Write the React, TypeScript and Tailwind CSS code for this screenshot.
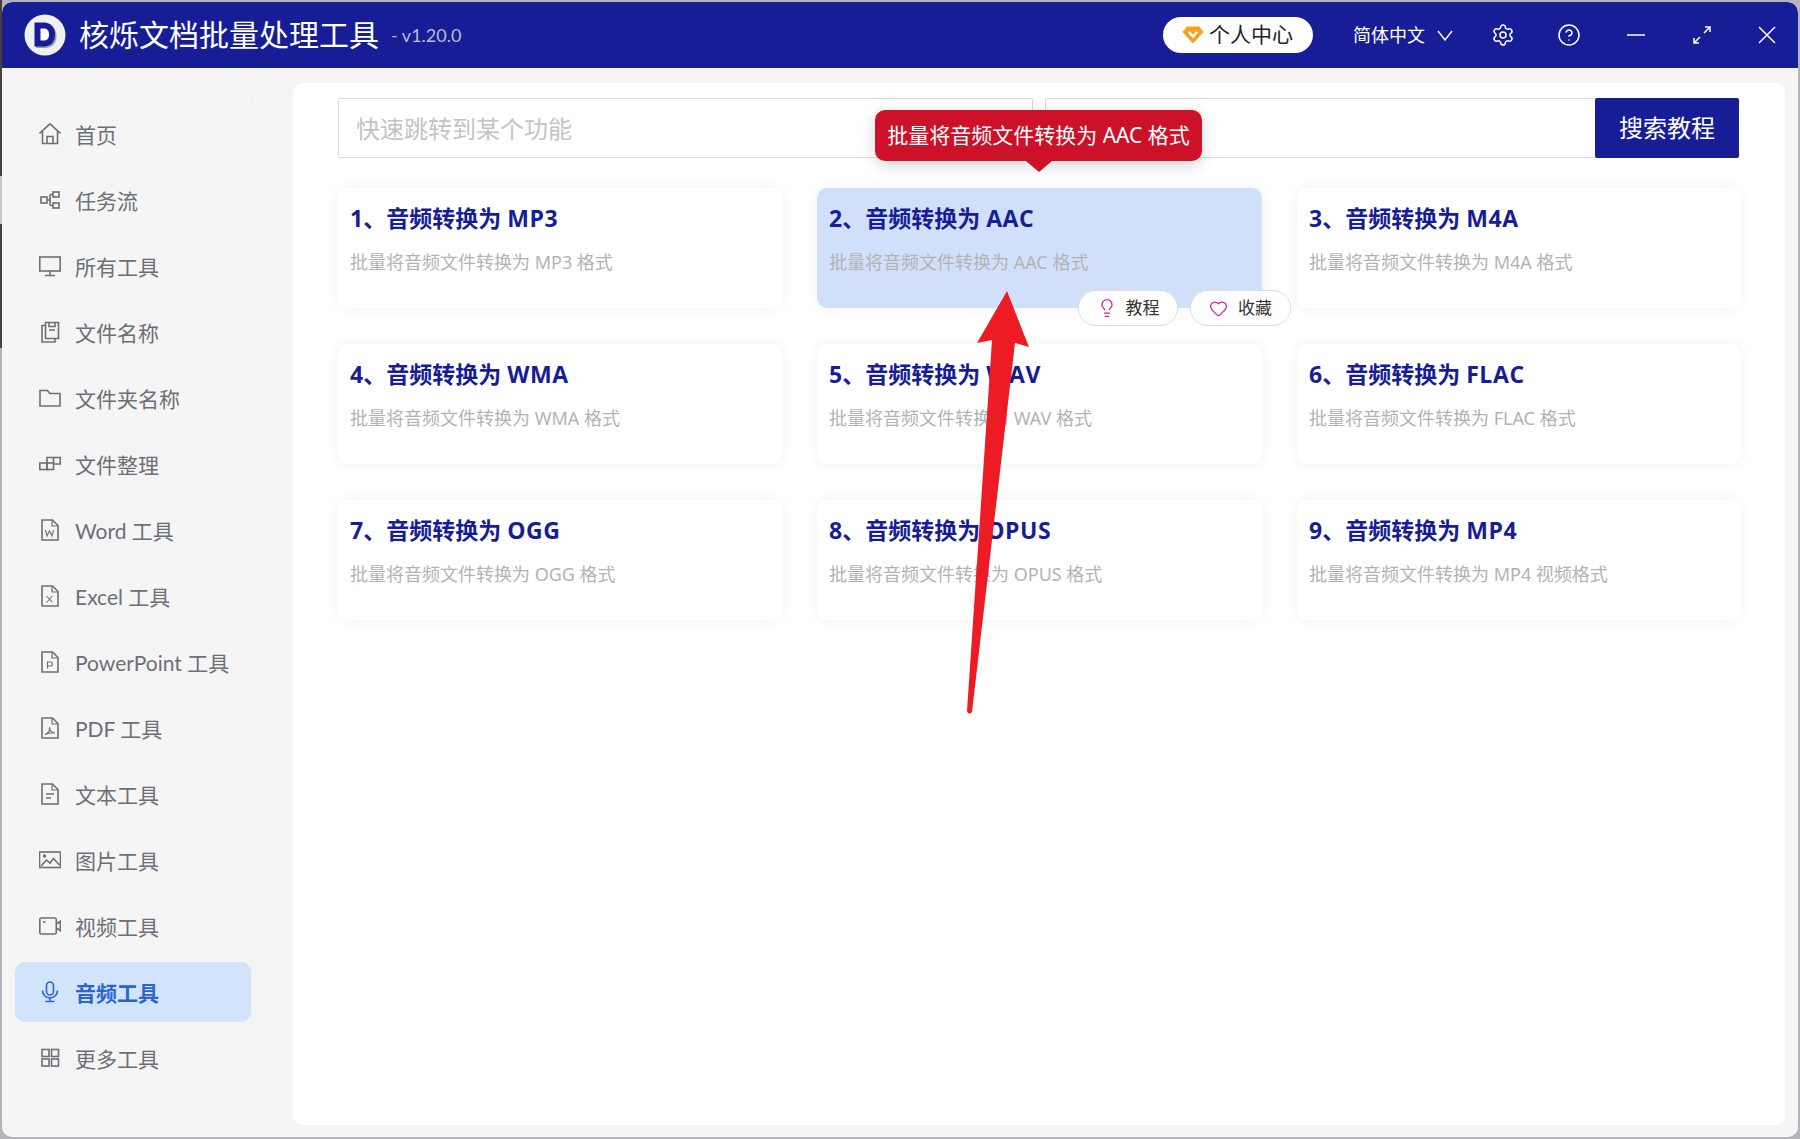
import { CircleHelp, Heart, Lightbulb, Settings } from "lucide-react";
import type { ReactNode } from "react";

const FONT = "font-['Noto_Sans','Noto_Sans_CJK_SC',sans-serif]";

const Ico = ({ children }: { children: ReactNode }) => (
  <svg width="22" height="22" viewBox="0 0 22 22" fill="none" stroke="currentColor" strokeWidth="1.6" className="shrink-0">
    {children}
  </svg>
);

const DocIcon = ({ children }: { children?: ReactNode }) => (
  <Ico>
    <path d="M3 1h10.500L19 6.500V21H3z" />
    <path d="M13 1v6h6" strokeWidth="1.2" />
    {children}
  </Ico>
);

const Letter = ({ d }: { d: string }) => <path d={d} strokeWidth="1.1" />;

const navItems: { label: string; icon: ReactNode; active?: boolean }[] = [
  {
    label: "首页",
    icon: (
      <Ico>
        <path d="M.5 10.500 11 .8l10.500 9.700M3.500 8.500V20.500h15V8.500" />
        <path d="M8 20.500v-7h6v7" />
      </Ico>
    ),
  },
  {
    label: "任务流",
    icon: (
      <Ico>
        <rect x="2" y="8" width="6" height="6" />
        <rect x="14" y="3" width="6" height="5" />
        <rect x="14" y="14" width="6" height="5" />
        <path d="M8 11h3M11 5.500h3M11 16.500h3M11 5.500v11" />
      </Ico>
    ),
  },
  {
    label: "所有工具",
    icon: (
      <Ico>
        <rect x=".8" y="2" width="20.400" height="14" />
        <path d="M11 16v4.500M6 20.500h10" />
      </Ico>
    ),
  },
  {
    label: "文件名称",
    icon: (
      <Ico>
        <path d="M6.500 4.500H3v16.500h13v-3.500" />
        <path d="M6.500 1.500v16h13V1.500zM10 1.500v4h6v-4M10 9h6" />
      </Ico>
    ),
  },
  {
    label: "文件夹名称",
    icon: (
      <Ico>
        <path d="M1 3.500h7.500l2.500 3h10v12.500H1z" />
      </Ico>
    ),
  },
  {
    label: "文件整理",
    icon: (
      <Ico>
        <rect x=".8" y="10" width="7.200" height="6.500" />
        <rect x="8" y="10" width="6.500" height="6.500" />
        <path d="M8 10V4.500h13.200V11h-6.700M14.500 4.500V10" />
      </Ico>
    ),
  },
  {
    label: "Word 工具",
    icon: (
      <DocIcon>
        <Letter d="m6.500 11 1.500 6 2.500-5 2.500 5 1.500-6" />
      </DocIcon>
    ),
  },
  {
    label: "Excel 工具",
    icon: (
      <DocIcon>
        <Letter d="m7.500 11 6 6.500M13.500 11l-6 6.500" />
      </DocIcon>
    ),
  },
  {
    label: "PowerPoint 工具",
    icon: (
      <DocIcon>
        <Letter d="M8.500 17.500V11h3a2 2 0 0 1 0 4h-3" />
      </DocIcon>
    ),
  },
  {
    label: "PDF 工具",
    icon: (
      <DocIcon>
        <Letter d="M6 17.500c3-1 5-4 4.500-7.500 0 3 2 5.500 5.500 6-3-.500-6.500 0-10 1.500z" />
      </DocIcon>
    ),
  },
  {
    label: "文本工具",
    icon: (
      <DocIcon>
        <path d="M7 11h8M7 15h5" />
      </DocIcon>
    ),
  },
  {
    label: "图片工具",
    icon: (
      <Ico>
        <rect x=".5" y="3" width="21" height="15.500" />
        <circle cx="5.500" cy="7" r="1" />
        <path d="m2 17 5.500-6 3.500 3 3.500-4.500 6 6.500" />
      </Ico>
    ),
  },
  {
    label: "视频工具",
    icon: (
      <Ico>
        <rect x=".8" y="3" width="16.500" height="16" rx="1.500" />
        <path d="m17.300 9 4-2.500v9l-4-2.500M4 7h2.500" />
      </Ico>
    ),
  },
  {
    label: "音频工具",
    active: true,
    icon: (
      <Ico>
        <rect x="7.500" y="1" width="7" height="13" rx="3.500" />
        <path d="M3.500 9.500a7.500 7.500 0 0 0 15 0M11 17v3.500M6.500 20.500h9" />
      </Ico>
    ),
  },
  {
    label: "更多工具",
    icon: (
      <Ico>
        <rect x="3" y="2.500" width="7" height="7" />
        <rect x="12.500" y="2.500" width="7" height="7" />
        <rect x="3" y="12" width="7" height="7" />
        <rect x="12.500" y="12" width="7" height="7" />
      </Ico>
    ),
  },
];

const cards = [
  { title: "1、音频转换为", fmt: "MP3", desc: "批量将音频文件转换为 MP3 格式" },
  { title: "2、音频转换为", fmt: "AAC", desc: "批量将音频文件转换为 AAC 格式", active: true },
  { title: "3、音频转换为", fmt: "M4A", desc: "批量将音频文件转换为 M4A 格式" },
  { title: "4、音频转换为", fmt: "WMA", desc: "批量将音频文件转换为 WMA 格式" },
  { title: "5、音频转换为", fmt: "WAV", desc: "批量将音频文件转换为 WAV 格式" },
  { title: "6、音频转换为", fmt: "FLAC", desc: "批量将音频文件转换为 FLAC 格式" },
  { title: "7、音频转换为", fmt: "OGG", desc: "批量将音频文件转换为 OGG 格式" },
  { title: "8、音频转换为", fmt: "OPUS", desc: "批量将音频文件转换为 OPUS 格式" },
  { title: "9、音频转换为", fmt: "MP4", desc: "批量将音频文件转换为 MP4 视频格式" },
];

function Header() {
  return (
    <header className="flex h-[66px] shrink-0 items-center rounded-t-[10px] bg-[#171d96] pr-[22px] pl-[21px] text-white">
      <svg width="44" height="44" viewBox="0 0 44 44" className="shrink-0">
        <circle cx="22" cy="22" r="20.500" fill="#f1f0f0" />
        <path d="M13 11h9c7.500 0 11.500 5 11.500 12S29.500 35 22 35h-9z" fill="#9c9ca8" />
        <path d="M11.500 9.500H21c7 0 11 5 11 12S28 33.500 21 33.500h-9.500z" fill="#171d96" />
        <path d="M17.500 15.500H21c3.500 0 5 2.500 5 6s-1.500 6-5 6h-3.500z" fill="#fff" />
      </svg>
      <span className="ml-[12px] text-[30px] leading-[40px] whitespace-nowrap">核烁文档批量处理工具</span>
      <span className="ml-[12px] font-['Lato','Noto_Sans_CJK_SC',sans-serif] text-[18px] text-[#b9bbd9]">- v1.20.0</span>
      <div className="ml-auto flex h-[36px] w-[150px] items-center rounded-full bg-white pl-[19px] text-[21px] text-[#222]">
        <svg width="22" height="18" viewBox="0 0 22 18" className="shrink-0">
          <path d="M5 .5h12L21.500 6 11 17.500.5 6z" fill="#f5a31e" />
          <path d="m7 6 4 4.500L15 6" fill="none" stroke="#fff" strokeWidth="2.500" />
        </svg>
        <span className="ml-[5px] whitespace-nowrap">个人中心</span>
      </div>
      <span className="ml-[40px] text-[18px] whitespace-nowrap">简体中文</span>
      <svg width="16" height="11" viewBox="0 0 16 11" fill="none" stroke="currentColor" strokeWidth="1.400" className="ml-[12px]">
        <path d="m1 1 7 9 7-9" />
      </svg>
      <Settings size={24} strokeWidth={1.5} className="ml-[38px]" />
      <CircleHelp size={24} strokeWidth={1.5} className="ml-[42px]" />
      <svg width="18" height="18" viewBox="0 0 18 18" stroke="currentColor" strokeWidth="1.500" className="ml-[46px]">
        <path d="M0 9h18" />
      </svg>
      <svg width="18" height="18" viewBox="0 0 18 18" fill="none" stroke="currentColor" strokeWidth="1.500" className="ml-[48px]">
        <path d="M11 7 17 1M12 1h5v5M7 11l-6 6M6 17H1v-5" />
      </svg>
      <svg width="18" height="18" viewBox="0 0 18 18" fill="none" stroke="currentColor" strokeWidth="1.500" className="ml-[47px]">
        <path d="m1 1 16 16M17 1 1 17" />
      </svg>
    </header>
  );
}

function Sidebar() {
  return (
    <aside className="w-[250px] shrink-0 pt-[30px]">
      <nav className="flex h-[992px] flex-col gap-[6px] border-r border-[#f0f0f0] pt-[6px] pl-[13px] font-['Lato','Noto_Sans_CJK_SC',sans-serif]">
        {navItems.map((item) => (
          <div
            key={item.label}
            className={`flex h-[60px] shrink-0 items-center gap-[14px] rounded-[10px] pl-[24px] text-[21px] whitespace-nowrap ${
              item.active ? "bg-[#d2e3fc] font-bold text-[#2a64cf]" : "text-[#6d6f76]"
            }`}
          >
            {item.icon}
            <span className="pt-[1px]">{item.label}</span>
          </div>
        ))}
      </nav>
    </aside>
  );
}

function SearchBar() {
  return (
    <div className="flex h-[60px]">
      <input
        placeholder="快速跳转到某个功能"
        className="h-full w-[695px] rounded-[2px] border border-[#d9d9d9] bg-white pl-[17px] text-[24px] outline-none placeholder:text-[#c4c4c4]"
      />
      <div className="ml-[12px] h-full w-[550px] rounded-l-[2px] border border-r-0 border-[#d9d9d9] bg-white" />
      <button className="h-full w-[144px] rounded-[2px] bg-[#171d96] text-[24px] text-white">搜索教程</button>
    </div>
  );
}

function Card({ title, fmt, desc, active }: { title: string; fmt: string; desc: string; active?: boolean }) {
  return (
    <div
      className={`relative h-[120px] rounded-[10px] pt-[14px] pl-[12px] shadow-[0_0_14px_rgba(0,0,0,0.06)] ${
        active ? "bg-[#d0e0fb]" : "bg-white"
      }`}
    >
      <div className="font-['Open_Sans','Noto_Sans_CJK_SC',sans-serif] text-[23px] leading-[32px] font-bold whitespace-nowrap text-[#171d96]">
        {title} <span className="tracking-[0.6px]">{fmt}</span>
      </div>
      <div className="mt-[15px] text-[18px] leading-[26px] whitespace-nowrap text-[#b3b3b3]">{desc}</div>
      {active && (
        <>
          <div className="absolute top-[-78px] left-[58px] flex h-[51px] w-[327px] items-center justify-center rounded-[10px] bg-[#cc1128] text-[21px] whitespace-nowrap text-white shadow-[0_4px_16px_rgba(0,0,0,0.16)]">
            批量将音频文件转换为 AAC 格式
          </div>
          <div className="absolute top-[-27px] left-[209px] h-0 w-0 border-x-[13px] border-t-[11px] border-x-transparent border-t-[#cc1128]" />
          <div className="absolute top-[102px] left-[261px] flex h-[36px] w-[100px] items-center justify-center gap-[9px] rounded-full border border-[#dcdcdc] bg-white text-[17px] text-[#333]">
            <Lightbulb size={20} strokeWidth={1.5} className="text-[#d6189c]" />
            <span>教程</span>
          </div>
          <div className="absolute top-[102px] left-[373px] flex h-[36px] w-[101px] items-center justify-center gap-[10px] rounded-full border border-[#dcdcdc] bg-white text-[17px] text-[#333]">
            <Heart size={19} strokeWidth={1.5} className="text-[#d6189c]" />
            <span>收藏</span>
          </div>
        </>
      )}
    </div>
  );
}

export default function App() {
  return (
    <div className={`relative flex h-[1139px] w-[1800px] overflow-hidden bg-[#b6b4ba] ${FONT}`}>
      {/* desktop peeking out behind the window */}
      <div className="flex w-[2px] shrink-0 flex-col">
        <div className="h-[176px] bg-[#4a3f3f]" />
        <div className="h-[48px] bg-[#c9c7cb]" />
        <div className="h-[124px] bg-[#4a3f3f]" />
      </div>
      <div className="flex min-w-0 flex-1 flex-col pt-[2px] pr-[2px] pb-[2px]">
        <div className="flex h-full flex-col overflow-hidden rounded-[10px] bg-[#f5f5f5]">
          <Header />
          <div className="flex min-h-0 flex-1">
            <Sidebar />
            <main className="mt-[15px] mr-[13px] mb-[12px] ml-[41px] flex-1 rounded-[10px] bg-white pt-[15px] pl-[45px]">
              <SearchBar />
              <div className="mt-[30px] grid grid-cols-[444px_445px_444px] gap-x-[35px] gap-y-[36px]">
                {cards.map((card) => (
                  <Card key={card.title} {...card} />
                ))}
              </div>
            </main>
          </div>
        </div>
      </div>
      {/* annotation arrow drawn over the screenshot */}
      <svg className="absolute top-0 left-0" width="1800" height="1139" viewBox="0 0 1800 1139">
        <path d="M1007 291 1029 347 1015 343 972 712Q969 716 967 711L992 340 977 343z" fill="#ed1c24" />
      </svg>
    </div>
  );
}
